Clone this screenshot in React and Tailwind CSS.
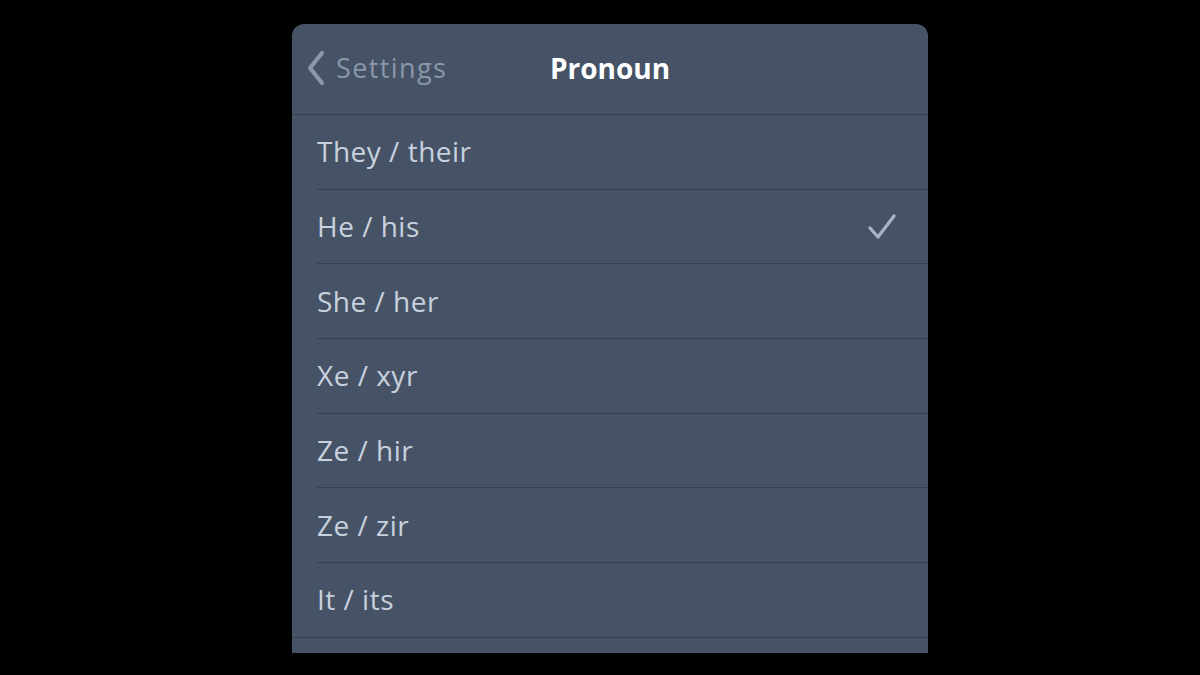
const pronouns = [
  { label: "They / their" },
  { label: "He / his", selected: true },
  { label: "She / her" },
  { label: "Xe / xyr" },
  { label: "Ze / hir" },
  { label: "Ze / zir" },
  { label: "It / its" },
];

function Chevron() {
  return (
    <svg width="22" height="36" viewBox="0 0 22 36" fill="none">
      <path
        d="M18 3 L6 18 L18 33"
        stroke="#8a97a9"
        strokeWidth="4.2"
        strokeLinecap="round"
        strokeLinejoin="round"
      />
    </svg>
  );
}

function Check() {
  return (
    <svg width="28" height="26" viewBox="0 0 28 26" fill="none">
      <path
        d="M2 14 L10 23 L26 2"
        stroke="#a9b4c4"
        strokeWidth="3.2"
        strokeLinecap="round"
        strokeLinejoin="round"
      />
    </svg>
  );
}

export default function App() {
  return (
    <div
      className="w-[1200px] h-[675px] bg-black flex overflow-hidden"
      style={{ fontFamily: "'Open Sans', 'Noto Sans', sans-serif" }}
    >
      <div className="w-[636px] ml-[292px] mt-[24px] h-[629px] bg-[#465366] rounded-t-[12px] flex flex-col">
        <header className="relative h-[91px] flex items-center border-b border-[#36404f] shrink-0">
          <div className="flex items-center gap-[10px] pl-[12px] text-[27px] tracking-[1.4px] text-[#8a97a9] -mt-[2px]">
            <Chevron />
            <span>Settings</span>
          </div>
          <h1 className="absolute left-0 right-0 text-center text-[28px] font-bold text-white -mt-[2px] pointer-events-none">
            Pronoun
          </h1>
        </header>
        <ul className="flex flex-col">
          {pronouns.map((p, i) => (
            <li key={i} className="pl-[25px]">
              <div
                className={`h-[74.7px] flex items-center justify-between pr-[32px] border-b border-[#36404f] ${
                  i === pronouns.length - 1 ? "-ml-[25px] pl-[25px]" : ""
                }`}
              >
                <span className="text-[28px] tracking-[0.5px] text-[#c8d1de] -mt-[1px]">
                  {p.label}
                </span>
                {p.selected && <Check />}
              </div>
            </li>
          ))}
        </ul>
      </div>
    </div>
  );
}
